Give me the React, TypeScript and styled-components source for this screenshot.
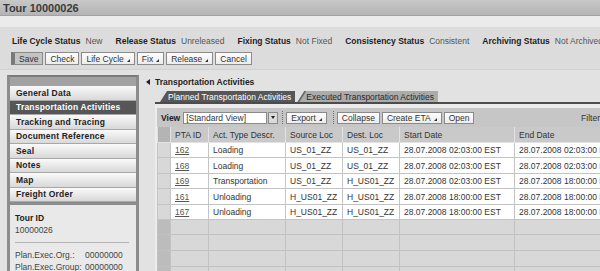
import React from 'react';
import styled, { createGlobalStyle } from 'styled-components';

// ============================================
// DATA
// ============================================

const STATUSES = [
  { label: 'Life Cycle Status', value: 'New' },
  { label: 'Release Status', value: 'Unreleased' },
  { label: 'Fixing Status', value: 'Not Fixed' },
  { label: 'Consistency Status', value: 'Consistent' },
  { label: 'Archiving Status', value: 'Not Archived' },
];

const ACTIONS = [
  { label: 'Save', primary: true },
  { label: 'Check' },
  { label: 'Life Cycle', menu: true },
  { label: 'Fix', menu: true },
  { label: 'Release', menu: true },
  { label: 'Cancel' },
];

const NAV = [
  'General Data',
  'Transportation Activities',
  'Tracking and Tracing',
  'Document Reference',
  'Seal',
  'Notes',
  'Map',
  'Freight Order',
];

const COLUMNS = [
  { title: 'PTA ID', width: 38 },
  { title: 'Act. Type Descr.', width: 77 },
  { title: 'Source Loc', width: 57 },
  { title: 'Dest. Loc', width: 57 },
  { title: 'Start Date', width: 115 },
  { title: 'End Date', width: 115 },
];

const ROWS = [
  ['162', 'Loading', 'US_01_ZZ', 'US_01_ZZ', '28.07.2008 02:03:00 EST', '28.07.2008 02:03:00 EST'],
  ['168', 'Loading', 'US_01_ZZ', 'US_01_ZZ', '28.07.2008 02:03:00 EST', '28.07.2008 02:03:00 EST'],
  ['169', 'Transportation', 'US_01_ZZ', 'H_US01_ZZ', '28.07.2008 02:03:00 EST', '28.07.2008 18:00:00 EST'],
  ['161', 'Unloading', 'H_US01_ZZ', 'H_US01_ZZ', '28.07.2008 18:00:00 EST', '28.07.2008 18:00:00 EST'],
  ['167', 'Unloading', 'H_US01_ZZ', 'H_US01_ZZ', '28.07.2008 18:00:00 EST', '28.07.2008 18:00:00 EST'],
];

// the grid rows in the capture alternate between 15px and 16px
const ROW_HEIGHTS = [15, 16, 15, 16, 15, 15, 16, 16, 16];

// ============================================
// STYLED COMPONENTS
// ============================================

const GlobalStyle = createGlobalStyle`
  html, body {
    margin: 0;
    padding: 0;
    background: #e2e2e2;
  }
  body {
    font-family: "Liberation Sans", Arial, sans-serif;
    font-size: 8.5px;
    color: #333;
  }
`;

const Page = styled.div`
  width: 600px;
  height: 271px;
  overflow: hidden;
  display: flex;
  flex-direction: column;
  background: #e2e2e2;
`;

const TitleBar = styled.div`
  height: 15px;
  flex-shrink: 0;
  display: flex;
  align-items: center;
  padding-left: 3px;
  background: linear-gradient(#c8c8c8, #b4b4b4);
  border-bottom: 1px solid #a2a2a2;
  font-size: 11px;
  font-weight: 700;
  color: #3a3a3a;
`;

const Band = styled.div`
  height: 11px;
  flex-shrink: 0;
  background: #ebebeb;
`;

const Header = styled.div`
  height: 43px;
  flex-shrink: 0;
  box-sizing: border-box;
  padding: 9px 0 0 12px;
  background: #dcdcdc;
  border-bottom: 1px solid #d2d2d2;
`;

const StatusRow = styled.div`
  display: flex;
  gap: 13px;
  height: 10px;
  align-items: center;
  white-space: nowrap;
`;

const StatusItem = styled.div`
  display: flex;
  gap: 5px;
`;

const StatusLabel = styled.span`
  font-weight: 700;
  color: #1e1e1e;
`;

const StatusValue = styled.span`
  color: #555;
`;

const ButtonRow = styled.div`
  display: flex;
  gap: 2px;
  margin: 6px 0 0 -1px;
`;

const ActionButton = styled.button<{ $primary?: boolean }>`
  height: 13px;
  box-sizing: border-box;
  display: flex;
  align-items: center;
  padding: 0 4px;
  font: inherit;
  color: #333;
  border: 1px solid #8a8a8a;
  border-radius: 0;
  background: ${({ $primary }) => ($primary ? '#c4c4c4' : 'linear-gradient(#fdfdfd, #ececec)')};
  border-left: ${({ $primary }) => ($primary ? '4px solid #7a7a7a' : '1px solid #8a8a8a')};
`;

const MenuCaret = styled.span`
  width: 0;
  height: 0;
  margin: 4px 0 0 3px;
  border-left: 3px solid transparent;
  border-bottom: 3px solid #333;
`;

const Body = styled.div`
  flex: 1;
  min-height: 0;
  display: flex;
`;

const Sidebar = styled.div`
  width: 132px;
  flex-shrink: 0;
  box-sizing: border-box;
  margin: 5px 0 0 7px;
  display: flex;
  flex-direction: column;
  border: 3px solid #8c8c8c;
  border-top: 2px solid #7a7a7a;
  border-bottom: none;
  background: #a2a2a2;
  padding-top: 9px;
`;

const NavItem = styled.div<{ $active?: boolean }>`
  height: 14.5px;
  flex-shrink: 0;
  box-sizing: border-box;
  display: flex;
  align-items: center;
  padding-left: 6px;
  font-weight: 700;
  letter-spacing: 0.2px;
  white-space: nowrap;
  border-bottom: 1px solid #a8a8a8;
  color: ${({ $active }) => ($active ? '#fff' : '#222')};
  background: ${({ $active }) => ($active ? '#565656' : 'linear-gradient(#fafafa, #d8d8d8)')};
`;

const InfoBox = styled.div`
  flex: 1;
  border-top: 3px solid #8c8c8c;
  background: #e9e9e9;
  padding: 7px 7px 0 5px;
`;

const InfoLine = styled.div<{ $bold?: boolean }>`
  height: 12px;
  line-height: 12px;
  font-weight: ${({ $bold }) => ($bold ? 700 : 400)};
  color: ${({ $bold }) => ($bold ? '#222' : '#444')};
`;

const InfoDivider = styled.hr`
  margin: 6px 0 6px 0;
  border: none;
  border-top: 1px solid #b4b4b4;
`;

const InfoGrid = styled.div`
  display: grid;
  grid-template-columns: 70px auto;
  grid-auto-rows: 12px;
  line-height: 12px;
  color: #444;
  white-space: nowrap;
`;

const Main = styled.div`
  flex: 1;
  min-width: 0;
  overflow: hidden;
  padding: 6px 0 0 7px;
`;

const SectionTitle = styled.div`
  height: 11px;
  display: flex;
  align-items: center;
  gap: 5px;
  font-weight: 700;
  color: #222;
`;

const BackArrow = styled.span`
  width: 0;
  height: 0;
  border-right: 4px solid #222;
  border-top: 3px solid transparent;
  border-bottom: 3px solid transparent;
`;

const TabArea = styled.div`
  margin: 4px 0 0 9px;
  width: 474px;
`;

const TabStrip = styled.div`
  height: 11px;
  display: flex;
  align-items: flex-end;
  gap: 2px;
  padding-left: 5px;
  border-bottom: 2px solid #4c4c4c;
`;

const Tab = styled.div<{ $active?: boolean }>`
  position: relative;
  height: 11px;
  display: flex;
  align-items: center;
  padding: 0 4px 0 ${({ $active }) => ($active ? 8 : 9)}px;
  white-space: nowrap;
  clip-path: polygon(7px 0, 100% 0, 100% 100%, 0 100%);
  color: ${({ $active }) => ($active ? '#fff' : '#2a2a2a')};
  background: ${({ $active }) => ($active ? '#575757' : '#ababab')};

  &::before {
    content: '';
    position: absolute;
    inset: 0;
    background: #6a6a6a;
    clip-path: polygon(6px 0, 9px 0, 2px 100%, 0 100%);
    display: ${({ $active }) => ($active ? 'none' : 'block')};
  }
`;

const TabPanel = styled.div`
  padding: 4px 0 0 2px;
  background: #ececec;
`;

const Toolbar = styled.div`
  height: 19px;
  display: flex;
  align-items: center;
  padding: 0 29px 0 4px;
  background: #c6c6c6;
  white-space: nowrap;
`;

const ToolLabel = styled.span`
  font-weight: 700;
  color: #222;
  margin-right: 3px;
`;

const SelectBox = styled.div`
  width: 84px;
  height: 12px;
  box-sizing: border-box;
  padding-left: 2px;
  display: flex;
  align-items: center;
  background: #fff;
  border: 1px solid #8a8a8a;
  color: #333;
`;

const SelectButton = styled.div`
  width: 10px;
  height: 12px;
  box-sizing: border-box;
  margin-left: 1px;
  display: flex;
  align-items: center;
  justify-content: center;
  background: #dadada;
  border: 1px solid #8a8a8a;

  &::after {
    content: '';
    border-top: 3px solid #222;
    border-left: 2.5px solid transparent;
    border-right: 2.5px solid transparent;
  }
`;

const ToolSeparator = styled.span`
  height: 13px;
  margin: 0 3px 0 4px;
  border-left: 1px dotted #6e6e6e;
`;

const ToolButton = styled(ActionButton)`
  height: 12px;
  margin-right: 2px;
`;

const FilterLabel = styled.span`
  margin-left: auto;
  color: #333;
`;

const Grid = styled.table`
  border-collapse: collapse;
  table-layout: fixed;
  width: 472px;
`;

const HeadCell = styled.th<{ $selector?: boolean }>`
  height: 15px;
  padding: 0 0 0 4px;
  text-align: left;
  font-weight: 400;
  white-space: nowrap;
  overflow: hidden;
  color: #333;
  background: ${({ $selector }) => ($selector ? '#b4b4b4' : '#c9c9c9')};
  border: 1px solid #e2e2e2;
  border-top: none;
`;

const Row = styled.tr<{ $height: number }>`
  height: ${({ $height }) => $height}px;
`;

const Cell = styled.td<{ $selector?: boolean; $empty?: boolean }>`
  padding: 0 0 0 4px;
  white-space: nowrap;
  overflow: hidden;
  color: #333;
  border: 1px solid ${({ $empty }) => ($empty ? '#c2c2c2' : '#c4c4c4')};
  background: ${({ $selector, $empty }) =>
    $selector ? ($empty ? '#bcbcbc' : '#d8d8d8') : $empty ? '#d8d8d8' : '#fff'};
`;

const IdLink = styled.a`
  color: #555;
  text-decoration: underline;
`;

// ============================================
// COMPONENT
// ============================================

const App: React.FC = () => {
  const emptyHeights = ROW_HEIGHTS.slice(ROWS.length);

  return (
    <Page>
      <GlobalStyle />
      <TitleBar>Tour 10000026</TitleBar>
      <Band />

      <Header>
        <StatusRow>
          {STATUSES.map((s) => (
            <StatusItem key={s.label}>
              <StatusLabel>{s.label}</StatusLabel>
              <StatusValue>{s.value}</StatusValue>
            </StatusItem>
          ))}
        </StatusRow>
        <ButtonRow>
          {ACTIONS.map((a) => (
            <ActionButton key={a.label} $primary={a.primary}>
              {a.label}
              {a.menu && <MenuCaret />}
            </ActionButton>
          ))}
        </ButtonRow>
      </Header>

      <Body>
        <Sidebar>
          {NAV.map((item) => (
            <NavItem key={item} $active={item === 'Transportation Activities'}>
              {item}
            </NavItem>
          ))}
          <InfoBox>
            <InfoLine $bold>Tour ID</InfoLine>
            <InfoLine>10000026</InfoLine>
            <InfoDivider />
            <InfoGrid>
              <span>Plan.Exec.Org.:</span>
              <span>00000000</span>
              <span>Plan.Exec.Group:</span>
              <span>00000000</span>
            </InfoGrid>
          </InfoBox>
        </Sidebar>

        <Main>
          <SectionTitle>
            <BackArrow />
            Transportation Activities
          </SectionTitle>

          <TabArea>
            <TabStrip>
              <Tab $active>Planned Transportation Activities</Tab>
              <Tab>Executed Transportation Activities</Tab>
            </TabStrip>

            <TabPanel>
              <Toolbar>
                <ToolLabel>View</ToolLabel>
                <SelectBox>[Standard View]</SelectBox>
                <SelectButton />
                <ToolSeparator />
                <ToolButton>
                  Export
                  <MenuCaret />
                </ToolButton>
                <ToolSeparator />
                <ToolButton>Collapse</ToolButton>
                <ToolButton>
                  Create ETA
                  <MenuCaret />
                </ToolButton>
                <ToolButton>Open</ToolButton>
                <FilterLabel>Filter</FilterLabel>
              </Toolbar>

              <Grid>
                <colgroup>
                  <col style={{ width: 13 }} />
                  {COLUMNS.map((c) => (
                    <col key={c.title} style={{ width: c.width }} />
                  ))}
                </colgroup>
                <thead>
                  <tr>
                    <HeadCell $selector />
                    {COLUMNS.map((c) => (
                      <HeadCell key={c.title}>{c.title}</HeadCell>
                    ))}
                  </tr>
                </thead>
                <tbody>
                  {ROWS.map((row, r) => (
                    <Row key={row[0]} $height={ROW_HEIGHTS[r]}>
                      <Cell $selector />
                      <Cell>
                        <IdLink>{row[0]}</IdLink>
                      </Cell>
                      {row.slice(1).map((v, i) => (
                        <Cell key={i}>{v}</Cell>
                      ))}
                    </Row>
                  ))}
                  {emptyHeights.map((h, r) => (
                    <Row key={`empty-${r}`} $height={h}>
                      <Cell $selector $empty />
                      {COLUMNS.map((c) => (
                        <Cell key={c.title} $empty />
                      ))}
                    </Row>
                  ))}
                </tbody>
              </Grid>
            </TabPanel>
          </TabArea>
        </Main>
      </Body>
    </Page>
  );
};

export default App;
